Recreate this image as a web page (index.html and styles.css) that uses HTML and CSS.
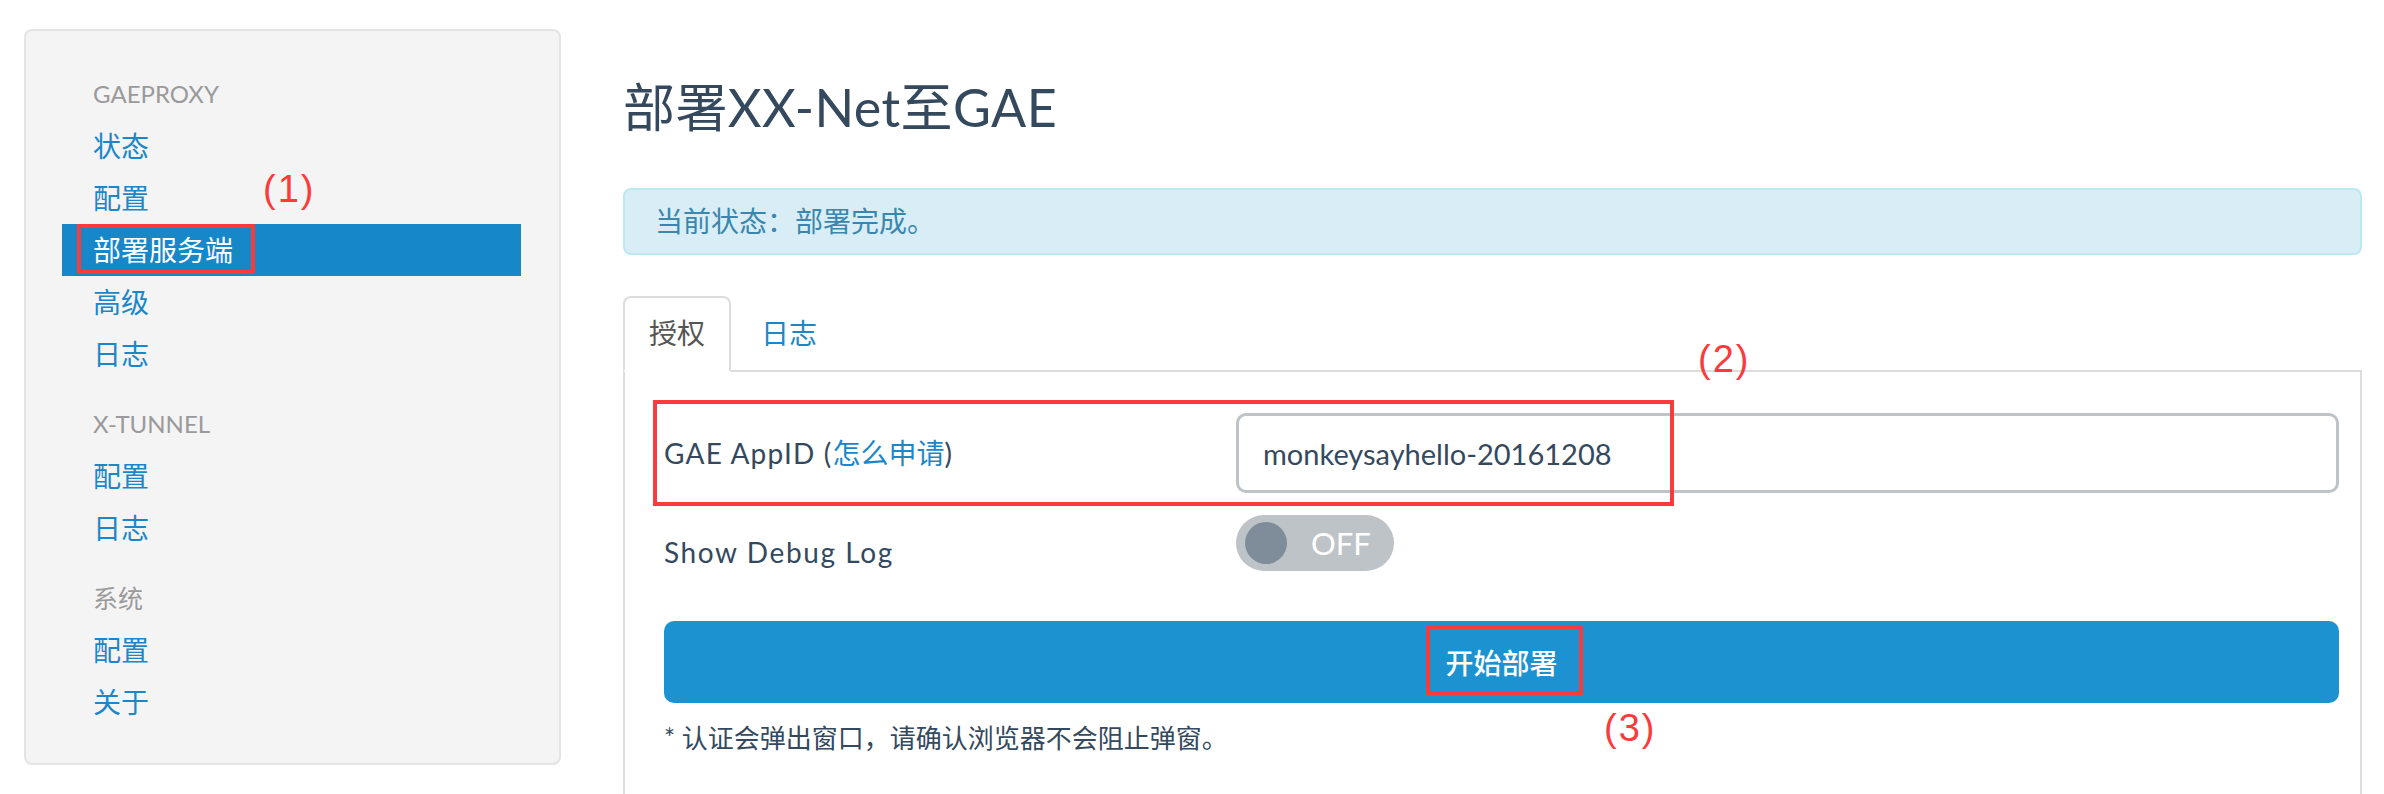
FILE: index.html
```html
<!DOCTYPE html>
<html lang="zh-CN">
<head>
<meta charset="utf-8">
<title>部署XX-Net至GAE</title>
<link rel="stylesheet" href="styles.css">
</head>
<body>
<div class="page">
  <aside class="sidebar">
    <div class="nav-header first">GAEPROXY</div>
    <ul class="nav">
      <li><a href="#">状态</a></li>
      <li><a href="#">配置</a></li>
      <li class="active"><a href="#">部署服务端</a><span class="mark mark-nav"></span></li>
      <li><a href="#">高级</a></li>
      <li><a href="#">日志</a></li>
    </ul>
    <div class="nav-header">X-TUNNEL</div>
    <ul class="nav">
      <li><a href="#">配置</a></li>
      <li><a href="#">日志</a></li>
    </ul>
    <div class="nav-header cjk">系统</div>
    <ul class="nav">
      <li><a href="#">配置</a></li>
      <li><a href="#">关于</a></li>
    </ul>
    <span class="num num-1">(1)</span>
  </aside>

  <main class="main">
    <h1 class="title">部署XX-Net至GAE</h1>
    <div class="alert">当前状态：部署完成。</div>

    <ul class="tabs">
      <li class="tab active">授权</li>
      <li class="tab"><a href="#">日志</a></li>
    </ul>

    <div class="tab-content">
      <form class="form">
        <div class="row">
          <label class="label">GAE AppID (<a href="#">怎么申请</a>)</label>
          <input class="input" type="text" value="monkeysayhello-20161208">
        </div>
        <div class="row row-switch">
          <label class="label label-top">Show Debug Log</label>
          <div class="switch"><span class="knob"></span><span class="switch-text">OFF</span></div>
        </div>
        <button type="button" class="btn">开始部署</button>
        <p class="hint">* 认证会弹出窗口，请确认浏览器不会阻止弹窗。</p>
      </form>
    </div>

    <span class="mark mark-appid"></span>
    <span class="mark mark-btn"></span>
    <span class="num num-2">(2)</span>
    <span class="num num-3">(3)</span>
  </main>
</div>
</body>
</html>
```
FILE: styles.css
```css
* { box-sizing: border-box; }

html, body {
  margin: 0;
  padding: 0;
  background: #ffffff;
}

body {
  font-family: Lato, "Noto Sans CJK SC", sans-serif;
  color: #34495e;
  font-size: 28px;
}

a { text-decoration: none; color: #1b87c9; }

.page {
  display: flex;
  align-items: flex-start;
  padding-left: 24px;
}

/* ---------- sidebar ---------- */
.sidebar {
  position: relative;
  margin-top: 29px;
  width: 537px;
  background: #f4f4f4;
  border: 2px solid #e4e4e4;
  border-radius: 8px;
  padding: 45px 38px 35px 36px;
}

.nav-header {
  height: 36px;
  line-height: 36px;
  margin: 26px 0 8px;
  padding-left: 31px;
  font-size: 24px;
  color: #9a9a9a;
}
.nav-header.first { margin-top: 0; }
.nav-header.cjk { font-size: 25px; }

.nav {
  list-style: none;
  margin: 0;
  padding: 0;
}
.nav li {
  position: relative;
  height: 52px;
}
.nav li a {
  display: block;
  height: 52px;
  line-height: 52px;
  padding-left: 31px;
  font-size: 28px;
  color: #1b87c9;
}
.nav li.active a {
  background: #1687c9;
  color: #ffffff;
}

/* ---------- annotations ---------- */
.mark {
  position: absolute;
  border: 4px solid #fb3b3b;
}
.mark-nav { left: 15px; top: 0; width: 178px; height: 50px; }
.mark-appid { left: 30px; top: 400px; width: 1021px; height: 106px; }
.mark-btn { left: 803px; top: 625px; width: 157px; height: 70px; }

.num {
  position: absolute;
  font-family: "Liberation Sans", sans-serif;
  font-size: 38px;
  line-height: 44px;
  color: #fb3b3b;
  letter-spacing: 2px;
}
.num-1 { left: 237px; top: 136px; }
.num-2 { left: 1075px; top: 337px; }
.num-3 { left: 981px; top: 706px; }

/* ---------- main ---------- */
.main {
  position: relative;
  margin-left: 62px;
  width: 1739px;
}

.title {
  margin: 75px 0 0;
  font-size: 52px;
  line-height: 64px;
  font-weight: 400;
  letter-spacing: 0.4px;
  color: #34495e;
}

.alert {
  margin-top: 49px;
  height: 67px;
  padding: 12px 30px;
  line-height: 39px;
  font-size: 28px;
  color: #3a87ad;
  background: #d9edf7;
  border: 2px solid #bce8f1;
  border-radius: 8px;
}

.tabs {
  display: flex;
  list-style: none;
  margin: 41px 0 0;
  padding: 0;
  border-bottom: 2px solid #dddddd;
}
.tab {
  margin-bottom: -2px;
  margin-right: 4px;
  padding: 15px 24px 17px;
  line-height: 40px;
  font-size: 28px;
  border: 2px solid transparent;
  border-radius: 8px 8px 0 0;
}
.tab.active {
  color: #555555;
  background: #ffffff;
  border-color: #dddddd #dddddd #ffffff;
}
.tab a { color: #1b87c9; }

.tab-content {
  border-left: 2px solid #dddddd;
  border-right: 2px solid #dddddd;
  padding: 41px 21px 60px 39px;
}

.row {
  display: grid;
  grid-template-columns: 572px 1fr;
  align-items: center;
}
.row-switch {
  margin-top: 22px;
  align-items: start;
}
.label {
  font-size: 28px;
  line-height: 40px;
  letter-spacing: 1.2px;
  color: #34495e;
}
.label a { letter-spacing: 0; }
.label-top { padding-top: 17px; letter-spacing: 1.6px; }

.input {
  height: 80px;
  width: 100%;
  border: 3px solid #bdc3c7;
  border-radius: 10px;
  padding: 0 24px;
  font-family: Lato, "Noto Sans CJK SC", sans-serif;
  font-size: 29px;
  color: #34495e;
  background: #ffffff;
  outline: none;
}

.switch {
  position: relative;
  width: 158px;
  height: 56px;
  border-radius: 28px;
  background: #bdc3c7;
  display: flex;
  align-items: center;
  padding-left: 9px;
}
.knob {
  width: 42px;
  height: 42px;
  border-radius: 50%;
  background: #7f8c9a;
}
.switch-text {
  margin-left: 24px;
  color: #ffffff;
  font-size: 31px;
  line-height: 40px;
}

.btn {
  display: block;
  margin-top: 49px;
  width: 100%;
  height: 82px;
  border: none;
  border-radius: 10px;
  background: #1c93d0;
  color: #ffffff;
  font-family: Lato, "Noto Sans CJK SC", sans-serif;
  font-size: 28px;
  font-weight: 500;
}

.hint {
  margin: 18px 0 0;
  font-size: 26px;
  line-height: 34px;
  color: #34495e;
}
```
